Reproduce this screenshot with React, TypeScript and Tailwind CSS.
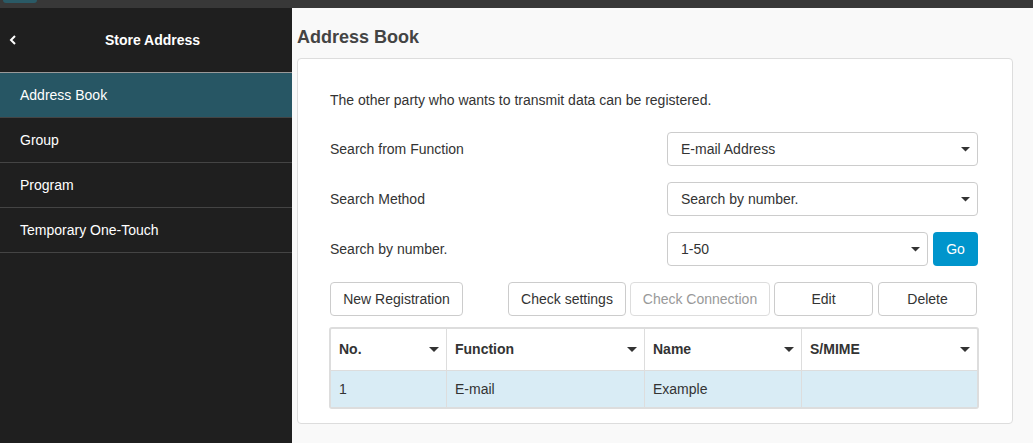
import React from "react";

const Caret = () => (
  <svg width="10" height="6" viewBox="0 0 10 6" className="shrink-0">
    <path d="M0 0 L10 0 L5 5 Z" fill="#333" />
  </svg>
);

const SmallCaret = () => (
  <svg width="9" height="5" viewBox="0 0 9 5" className="shrink-0">
    <path d="M0 0 L9 0 L4.5 4.5 Z" fill="#333" />
  </svg>
);

function Select({ value, className = "" }: { value: string; className?: string }) {
  return (
    <div className={`flex h-[34px] items-center justify-between rounded-[4px] border border-[#cccccc] bg-white pl-[13px] pr-[7px] ${className}`}>
      <span className="text-[14px] text-[#333]">{value}</span>
      <SmallCaret />
    </div>
  );
}

function Btn({ label, className = "", disabled = false }: { label: string; className?: string; disabled?: boolean }) {
  return (
    <div
      className={`flex h-[34px] items-center justify-center rounded-[4px] border bg-white text-[14px] ${
        disabled ? "border-[#dddddd] text-[#999]" : "border-[#cccccc] text-[#333]"
      } ${className}`}
    >
      {label}
    </div>
  );
}

export default function App() {
  const items = ["Address Book", "Group", "Program", "Temporary One-Touch"];
  return (
    <div className="flex h-[443px] w-[1033px] flex-col overflow-hidden font-['Liberation_Sans',Arial,sans-serif]">
      <div className="relative h-[8px] shrink-0 bg-[#383838]">
        <div className="absolute left-[3px] top-0 h-[3px] w-[34px] rounded-b-[6px] bg-[#2a5a66]" />
      </div>
      <div className="flex min-h-0 flex-1">
        <aside className="flex w-[292px] shrink-0 flex-col bg-[#1f1f1f]">
          <div className="relative flex h-[65px] items-center justify-center border-b border-[#9a9a9a] pl-[13px]">
            <svg width="8" height="10" viewBox="0 0 8 10" className="absolute left-[9px] top-[27px]">
              <path d="M6 1 L2 5 L6 9" stroke="#fff" strokeWidth="2" fill="none" />
            </svg>
            <span className="text-[14px] font-bold text-white">Store Address</span>
          </div>
          {items.map((it, i) => (
            <div
              key={it}
              className={`flex h-[45px] items-center border-b border-[#444] pl-[20px] text-[14px] text-white ${
                i === 0 ? "bg-[#275664]" : ""
              }`}
            >
              {it}
            </div>
          ))}
        </aside>
        <main className="flex flex-1 flex-col bg-[#f9f9f9] pl-[5px] pr-[22px]">
          <h1 className="mt-[19px] h-[31px] text-[18px] font-bold leading-[20px] text-[#444]">Address Book</h1>
          <div className="h-[366px] rounded-[4px] border border-[#dddddd] bg-white pl-[32px] pr-[33px] pt-[33px]">
            <p className="text-[14px] leading-[16px] text-[#333]">The other party who wants to transmit data can be registered.</p>
            <div className="mt-[24px] flex flex-col gap-[16px]">
              <div className="flex items-center">
                <span className="w-[337px] text-[14px] text-[#333]">Search from Function</span>
                <Select value="E-mail Address" className="w-[311px]" />
              </div>
              <div className="flex items-center">
                <span className="w-[337px] text-[14px] text-[#333]">Search Method</span>
                <Select value="Search by number." className="w-[311px]" />
              </div>
              <div className="flex items-center">
                <span className="w-[337px] text-[14px] text-[#333]">Search by number.</span>
                <Select value="1-50" className="w-[261px]" />
                <div className="ml-[5px] flex h-[34px] w-[45px] items-center justify-center rounded-[4px] bg-[#0095cc] text-[14px] text-white">
                  Go
                </div>
              </div>
            </div>
            <div className="mt-[16px] flex">
              <Btn label="New Registration" className="w-[133px]" />
              <Btn label="Check settings" className="ml-[45px] w-[118px]" />
              <Btn label="Check Connection" className="ml-[4px] w-[140px]" disabled />
              <Btn label="Edit" className="ml-[4px] w-[99px]" />
              <Btn label="Delete" className="ml-[5px] w-[99px]" />
            </div>
            <div className="-ml-[1px] mt-[11px] w-[650px] rounded-[3px] border-2 border-[#dddddd]">
              <div className="grid grid-cols-[116px_198px_157px_1fr] border-b border-[#dddddd]">
                {["No.", "Function", "Name", "S/MIME"].map((h, i) => (
                  <div
                    key={h}
                    className={`flex h-[41px] items-center justify-between pl-[8px] pr-[7px] text-[14px] font-bold text-[#333] ${
                      i < 3 ? "border-r border-[#dddddd]" : ""
                    }`}
                  >
                    <span>{h}</span>
                    <Caret />
                  </div>
                ))}
              </div>
              <div className="grid grid-cols-[116px_198px_157px_1fr] bg-[#d9ecf5]">
                {["1", "E-mail", "Example", ""].map((c, i) => (
                  <div
                    key={i}
                    className={`flex h-[36px] items-center pl-[8px] text-[14px] text-[#333] ${
                      i < 3 ? "border-r border-[#dddddd]" : ""
                    }`}
                  >
                    {c}
                  </div>
                ))}
              </div>
            </div>
          </div>
        </main>
      </div>
    </div>
  );
}
